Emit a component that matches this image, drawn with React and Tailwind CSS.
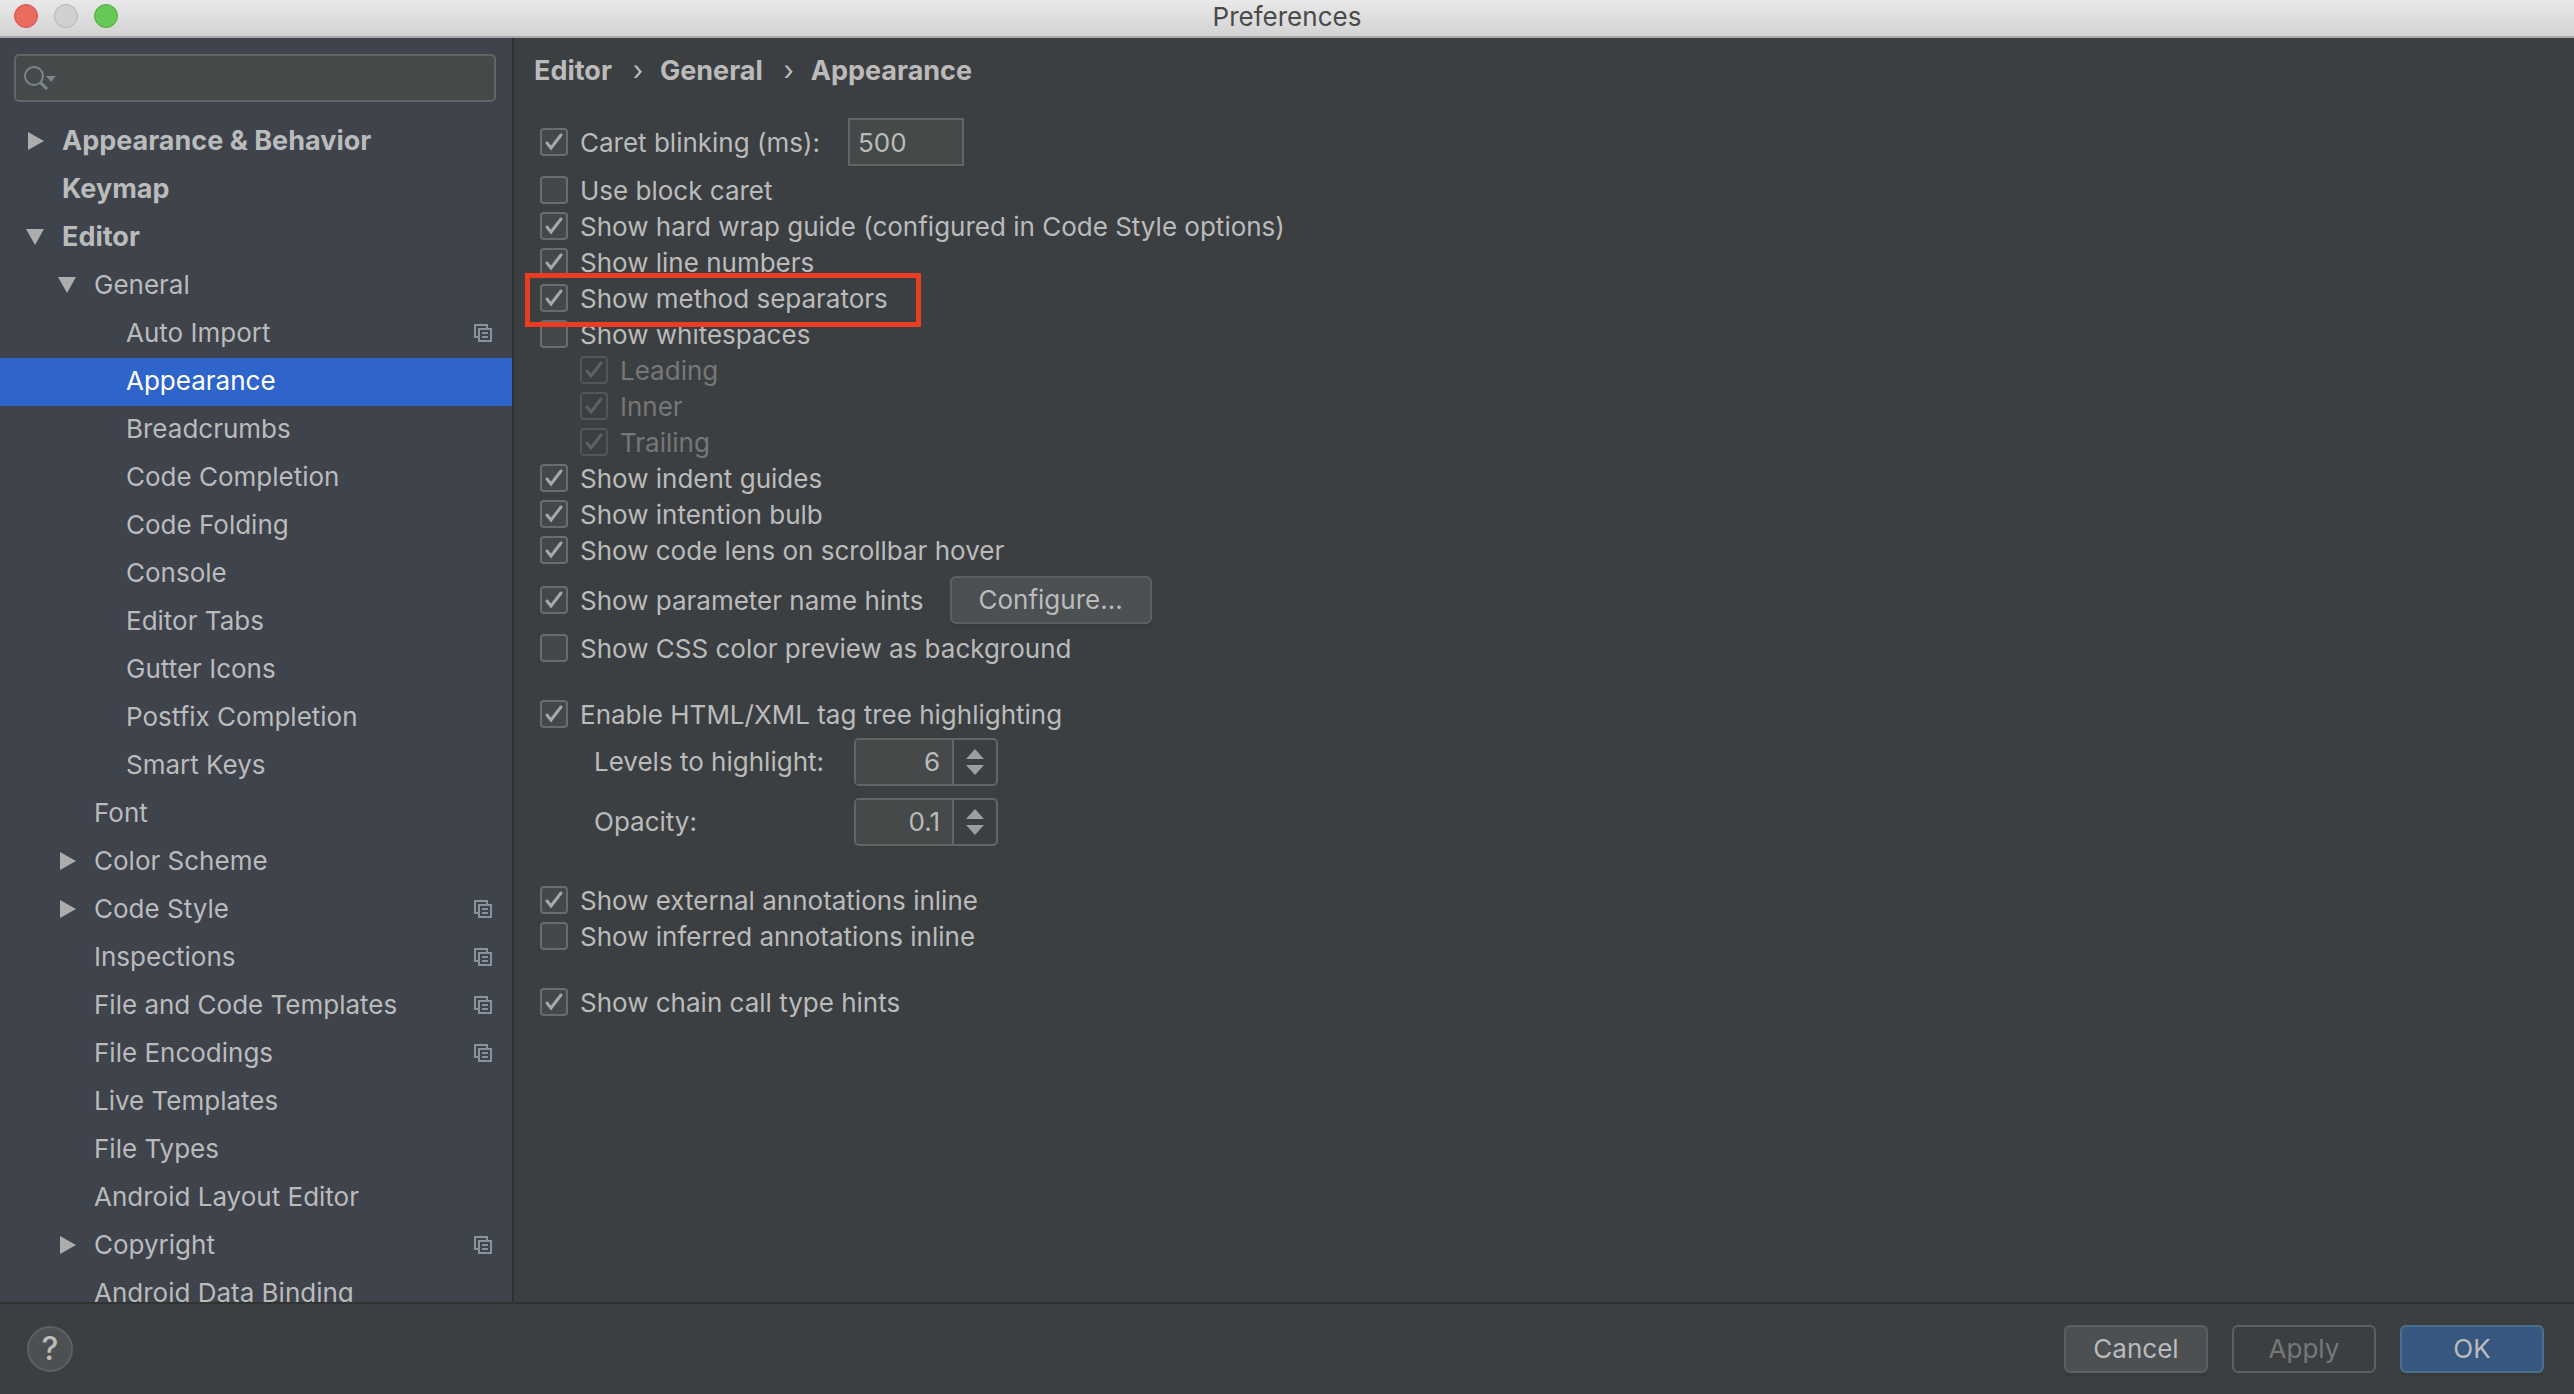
import React, { useState } from 'react';

const treeItems = [
  { label: 'Appearance & Behavior', level: 0, arrow: 'right' },
  { label: 'Keymap', level: 0 },
  { label: 'Editor', level: 0, arrow: 'down' },
  { label: 'General', level: 1, arrow: 'down' },
  { label: 'Auto Import', level: 2, project: true },
  { label: 'Appearance', level: 2 },
  { label: 'Breadcrumbs', level: 2 },
  { label: 'Code Completion', level: 2 },
  { label: 'Code Folding', level: 2 },
  { label: 'Console', level: 2 },
  { label: 'Editor Tabs', level: 2 },
  { label: 'Gutter Icons', level: 2 },
  { label: 'Postfix Completion', level: 2 },
  { label: 'Smart Keys', level: 2 },
  { label: 'Font', level: 1 },
  { label: 'Color Scheme', level: 1, arrow: 'right' },
  { label: 'Code Style', level: 1, arrow: 'right', project: true },
  { label: 'Inspections', level: 1, project: true },
  { label: 'File and Code Templates', level: 1, project: true },
  { label: 'File Encodings', level: 1, project: true },
  { label: 'Live Templates', level: 1 },
  { label: 'File Types', level: 1 },
  { label: 'Android Layout Editor', level: 1 },
  { label: 'Copyright', level: 1, arrow: 'right', project: true },
  { label: 'Android Data Binding', level: 1 },
];

const indents = ['pl-6', 'pl-14', 'pl-22'];

function Arrow({ direction }) {
  return (
    <svg width="24" height="24" viewBox="0 0 24 24" fill="#adadad" aria-hidden="true">
      {direction === 'right' && <path d="M4 3v18l16-9z" />}
      {direction === 'down' && <path d="M2 4h18l-9 16z" />}
    </svg>
  );
}

function ProjectIcon() {
  return (
    <svg width="18" height="18" viewBox="0 0 18 18" fill="none" stroke="#87939a" strokeWidth="2" aria-hidden="true">
      <path d="M4 13H1V1h12v3" />
      <path d="M5 5h12v12H5zM8 9h6M8 13h6" />
    </svg>
  );
}

function TreeRow({ item, selected, onSelect }) {
  return (
    <li>
      <button
        type="button"
        onClick={onSelect}
        className={`flex h-12 w-full items-center pr-5 pb-0.5 text-left ${indents[item.level]} ${
          selected ? 'bg-[#2f65ca] text-white' : ''
        } ${item.level === 0 ? 'text-[27px] font-bold' : ''}`}
      >
        <span className="mr-3.5 w-6 shrink-0">
          <Arrow direction={item.arrow} />
        </span>
        <span className="grow whitespace-nowrap">{item.label}</span>
        {item.project && <ProjectIcon />}
      </button>
    </li>
  );
}

function Check({ label, defaultChecked = false, disabled = false }) {
  return (
    <label className={`flex h-9 items-center gap-3 whitespace-nowrap ${disabled ? 'text-[#777777]' : ''}`}>
      <span className="grid size-7 shrink-0">
        <input
          type="checkbox"
          defaultChecked={defaultChecked}
          disabled={disabled}
          className="peer col-start-1 row-start-1 size-7 appearance-none rounded-[4px] border-2 border-[#6b6b6b] bg-[#43494a] disabled:border-[#545556] disabled:bg-[#3c3f41]"
        />
        <svg
          viewBox="0 0 28 28"
          fill="none"
          strokeWidth="3"
          strokeLinecap="round"
          className="pointer-events-none col-start-1 row-start-1 size-7 stroke-[#a7a7a7] opacity-0 peer-checked:opacity-100 peer-disabled:stroke-[#606060]"
          aria-hidden="true"
        >
          <path d="M7 15l4 5L21 7" />
        </svg>
      </span>
      <span className="pt-0.5">{label}</span>
    </label>
  );
}

function Spinner({ id, value, step, onChange }) {
  const change = (sign) => onChange(Number((value + sign * step).toFixed(1)));

  return (
    <div className="flex h-12 w-36 overflow-hidden rounded-[5px] border-2 border-[#646464]">
      <input
        id={id}
        value={value}
        onChange={(e) => onChange(Number(e.target.value) || 0)}
        className="w-0 grow bg-[#45494a] pr-3 text-right outline-none"
      />
      <div className="flex w-11 flex-col items-center justify-center gap-1.5 border-l-2 border-[#646464]">
        <button type="button" aria-label="Increase" onClick={() => change(1)}>
          <svg width="18" height="10" viewBox="0 0 18 10" fill="#9b9fa3" className="block"><path d="M0 10h18L9 0z" /></svg>
        </button>
        <button type="button" aria-label="Decrease" onClick={() => change(-1)}>
          <svg width="18" height="10" viewBox="0 0 18 10" fill="#9b9fa3" className="block"><path d="M0 0h18L9 10z" /></svg>
        </button>
      </div>
    </div>
  );
}

function Button({ children, className }) {
  return (
    <button type="button" className={`h-12 rounded-[6px] border-2 ${className}`}>
      {children}
    </button>
  );
}

function Sidebar() {
  const [selected, setSelected] = useState('Appearance');

  return (
    <aside className="flex w-[514px] shrink-0 flex-col overflow-hidden border-r-2 border-[#323232] bg-[#3e434c]">
      <div className="my-4 mr-4 ml-3.5 flex h-12 shrink-0 items-center rounded-[5px] border-2 border-[#646464] bg-[#45494a] px-2">
        <svg width="32" height="24" viewBox="0 0 32 24" fill="none" aria-hidden="true">
          <circle cx="10" cy="10" r="9" stroke="#7a878f" strokeWidth="2" />
          <path d="M16 16l7 7" stroke="#7a878f" strokeWidth="3" />
          <path d="M22 10h10l-5 6z" fill="#7a878f" />
        </svg>
        <input type="text" aria-label="Search settings" className="w-0 grow px-2 outline-none" />
      </div>
      <ul className="min-h-0 grow overflow-y-auto [scrollbar-width:none]">
        {treeItems.map((item) => (
          <TreeRow
            key={item.label}
            item={item}
            selected={selected === item.label}
            onSelect={() => setSelected(item.label)}
          />
        ))}
      </ul>
    </aside>
  );
}

function AppearanceSettings() {
  const [levels, setLevels] = useState(6);
  const [opacity, setOpacity] = useState(0.1);

  return (
    <main className="grow overflow-hidden pl-5">
      <nav aria-label="Breadcrumb" className="flex h-16 items-center pt-0.5 text-[27px] font-bold">
        <span>Editor</span>
        <span className="w-12 pl-1 text-center font-normal">›</span>
        <span>General</span>
        <span className="w-12 pl-1 text-center font-normal">›</span>
        <span>Appearance</span>
      </nav>

      <div className="mt-4 flex flex-col items-start pl-1.5">
        <div className="mb-1.5 flex items-center gap-7">
          <Check label="Caret blinking (ms):" defaultChecked />
          <input
            type="text"
            aria-label="Caret blinking period"
            defaultValue="500"
            className="h-12 w-29 border-2 border-[#646464] bg-[#45494a] px-2 outline-none"
          />
        </div>
        <Check label="Use block caret" />
        <Check label="Show hard wrap guide (configured in Code Style options)" defaultChecked />
        <Check label="Show line numbers" defaultChecked />
        <div className="relative">
          <Check label="Show method separators" defaultChecked />
          {/* Highlight around the option */}
          <div className="pointer-events-none absolute -top-[7px] -right-[33px] -bottom-[11px] -left-[15px] border-5 border-[#e93c23]" />
        </div>
        <Check label="Show whitespaces" />
        <div className="pl-10">
          <Check label="Leading" defaultChecked disabled />
          <Check label="Inner" defaultChecked disabled />
          <Check label="Trailing" defaultChecked disabled />
        </div>
        <Check label="Show indent guides" defaultChecked />
        <Check label="Show intention bulb" defaultChecked />
        <Check label="Show code lens on scrollbar hover" defaultChecked />
        <div className="mt-2 mb-1.5 flex items-center gap-[26px]">
          <Check label="Show parameter name hints" defaultChecked />
          <Button className="w-[202px] border-[#5e6060] bg-[#4c5052] shadow-[0_4px_0_#383a3c]">Configure...</Button>
        </div>
        <Check label="Show CSS color preview as background" />

        <div className="mt-[30px]">
          <Check label="Enable HTML/XML tag tree highlighting" defaultChecked />
          <div className="mt-1.5 grid grid-cols-[260px_auto] items-center gap-y-3 pl-[54px]">
            <label htmlFor="levels">Levels to highlight:</label>
            <Spinner id="levels" value={levels} step={1} onChange={setLevels} />
            <label htmlFor="opacity">Opacity:</label>
            <Spinner id="opacity" value={opacity} step={0.1} onChange={setOpacity} />
          </div>
        </div>

        <div className="mt-9">
          <Check label="Show external annotations inline" defaultChecked />
          <Check label="Show inferred annotations inline" />
        </div>
        <div className="mt-[30px]">
          <Check label="Show chain call type hints" defaultChecked />
        </div>
      </div>
    </main>
  );
}

function App() {
  return (
    <div className="flex h-screen flex-col overflow-hidden bg-[#3c3f41] font-['Inter',sans-serif] text-[26px] leading-9 text-[#bbbbbb]">
      <header className="grid h-[38px] shrink-0 grid-cols-[1fr_auto_1fr] items-start border-b-2 border-[#a8a8a8] bg-linear-to-b from-[#e9e9e9] to-[#d3d3d3] px-3.5">
        <div className="flex gap-4 pt-1">
          <button type="button" aria-label="Close" className="size-6 rounded-full border border-[#d55348] bg-[#ec6b60]" />
          <button type="button" aria-label="Minimize" className="size-6 rounded-full border border-[#b4b4b4] bg-[#d0d0d0]" />
          <button type="button" aria-label="Zoom" className="size-6 rounded-full border border-[#55a83e] bg-[#65c956]" />
        </div>
        <h1 className="leading-[34px] text-[#4a4a4a]">Preferences</h1>
      </header>

      <div className="flex min-h-0 grow">
        <Sidebar />
        <AppearanceSettings />
      </div>

      <footer className="flex h-[92px] shrink-0 items-center justify-between border-t-2 border-[#323232] pr-[30px] pl-[27px]">
        <button type="button" aria-label="Help" className="grid size-[46px] place-items-center rounded-full border-2 border-[#5e6060] bg-[#4c5052]">
          <span className="text-[32px] font-medium">?</span>
        </button>
        <div className="flex gap-6">
          <Button className="w-36 border-[#5e6060] bg-[#4c5052] shadow-[0_4px_0_#383a3c]">Cancel</Button>
          <Button className="w-36 border-[#5e6060] text-[#777777]">Apply</Button>
          <Button className="w-36 border-[#4c708c] bg-[#365880] shadow-[0_4px_0_#383a3c]">OK</Button>
        </div>
      </footer>
    </div>
  );
}

export default App;
